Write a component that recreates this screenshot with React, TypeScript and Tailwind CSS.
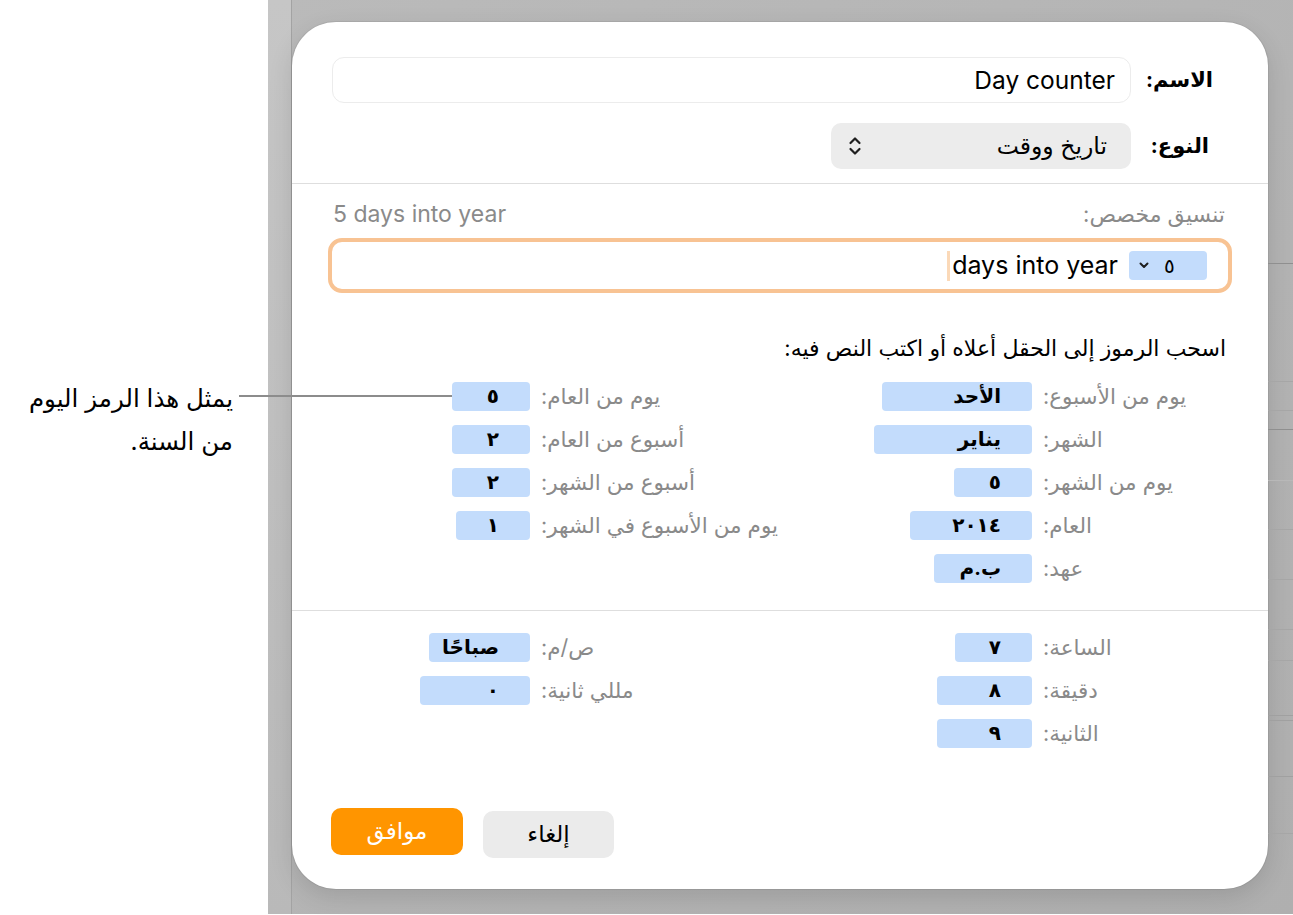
const rightRows = [
  { label: "يوم من الأسبوع:", value: "الأحد", w: "w-[150px]" },
  { label: "الشهر:", value: "يناير", w: "w-[158px]" },
  { label: "يوم من الشهر:", value: "٥", w: "w-[78px]" },
  { label: "العام:", value: "٢٠١٤", w: "w-[122px]" },
  { label: "عهد:", value: "ب.م", w: "w-[98px]" },
];

const leftRows = [
  { label: "يوم من العام:", value: "٥", w: "w-[78px]" },
  { label: "أسبوع من العام:", value: "٢", w: "w-[78px]" },
  { label: "أسبوع من الشهر:", value: "٢", w: "w-[78px]" },
  { label: "يوم من الأسبوع في الشهر:", value: "١", w: "w-[74px]" },
];

const timeRight = [
  { label: "الساعة:", value: "٧", w: "w-[77px]" },
  { label: "دقيقة:", value: "٨", w: "w-[95px]" },
  { label: "الثانية:", value: "٩", w: "w-[95px]" },
];

const timeLeft = [
  { label: "ص/م:", value: "صباحًا", w: "w-[101px]" },
  { label: "مللي ثانية:", value: "٠", w: "w-[110px]" },
];

type Row = { label: string; value: string; w: string };

function Token({ value, w }: { value: string; w: string }) {
  return (
    <div
      dir="rtl"
      className={`${w} h-[29px] rounded-[4px] bg-[#c3dcfc] pr-[31px] text-[20px] font-bold leading-[29px] text-black`}
    >
      {value}
    </div>
  );
}

function Column({ rows, boxW }: { rows: Row[]; boxW: string }) {
  return (
    <div className="flex flex-col gap-[14px]">
      {rows.map((r) => (
        <div key={r.label} className="flex h-[29px] items-center">
          <div className={`${boxW} flex shrink-0 justify-end`}>
            <Token value={r.value} w={r.w} />
          </div>
          <div dir="rtl" className="ml-[11px] whitespace-nowrap text-[21.5px] text-[#8a8a8a]">
            {r.label}
          </div>
        </div>
      ))}
    </div>
  );
}

function UpDown() {
  return (
    <svg width="14" height="22" viewBox="0 0 14 22" fill="none" stroke="#1f1f1f" strokeWidth="2.2" strokeLinecap="round" strokeLinejoin="round">
      <path d="M2.5 8 L7 3.5 L11.5 8" />
      <path d="M2.5 14 L7 18.5 L11.5 14" />
    </svg>
  );
}

function SmallChevron() {
  return (
    <svg width="10" height="7" viewBox="0 0 10 7" fill="none" stroke="#1f1f1f" strokeWidth="2" strokeLinecap="round" strokeLinejoin="round">
      <path d="M1.5 1.5 L5 5 L8.5 1.5" />
    </svg>
  );
}

function BackdropLines() {
  return (
    <div className="flex flex-col">
      <div className="h-[264px] border-b border-[#8f8f8f]" />
      <div className="h-[118px] border-b border-[#a6a6a6]" />
      <div className="h-[29px] border-b border-[#a6a6a6]" />
      <div className="h-[19px] border-b border-[#8f8f8f]" />
      <div className="h-[51px] border-b border-[#b8b8b8]" />
      <div className="h-[49px] border-b border-[#a6a6a6]" />
      <div className="h-[50px] border-b border-[#a6a6a6]" />
      <div className="h-[50px] border-b border-[#a6a6a6]" />
      <div className="h-[31px] border-b border-[#a6a6a6]" />
      <div className="h-[55px] border-b border-[#a0a0a0]" />
      <div className="h-[5px] border-b border-[#a0a0a0]" />
      <div className="h-[56px] border-b border-[#a0a0a0]" />
      <div className="h-[57px] border-b border-[#a6a6a6]" />
    </div>
  );
}

export default function App() {
  return (
    <div className="relative flex h-[915px] w-[1293px] overflow-hidden bg-white font-[Inter,'DejaVu_Sans',sans-serif] text-black">
      {/* annotation */}
      <div dir="rtl" className="w-[268px] shrink-0 whitespace-nowrap pr-[35px] pt-[377px] text-[24.5px] leading-[43px]">
        <div>يمثل هذا الرمز اليوم</div>
        <div>من السنة.</div>
      </div>

      <div className="flex h-[914px] flex-1 bg-gradient-to-br from-[#bababa] to-[#afafaf]">
        <div className="w-[24px] shrink-0 border-r border-[#a3a3a3] bg-gradient-to-b from-[#c6c6c6] to-[#b9b9b9]" />

        <div className="mt-[22px] flex h-[867px] w-[976px] shrink-0 flex-col rounded-[44px] bg-white shadow-[0_0_0_1px_rgba(0,0,0,0.06),0_8px_24px_rgba(0,0,0,0.12)]">
          {/* name / type */}
          <div className="flex items-center pl-[40px] pr-[55px] pt-[35px]">
            <div className="flex h-[46px] flex-1 items-center justify-end rounded-[12px] border border-[#ececec] pr-[15px] text-[24.5px]">
              Day counter
            </div>
            <div dir="rtl" className="w-[82px] text-[21px] font-bold">
              الاسم:
            </div>
          </div>
          <div className="mt-[20px] flex items-center justify-end pr-[55px]">
            <div className="flex h-[46px] w-[300px] items-center justify-between rounded-[10px] bg-[#ececec] pl-[17px] pr-[24px]">
              <UpDown />
              <span dir="rtl" className="text-[23.5px]">تاريخ ووقت</span>
            </div>
            <div dir="rtl" className="w-[82px] pr-[4px] text-[21px] font-bold">
              النوع:
            </div>
          </div>

          <div className="mt-[14px] h-px bg-[#dedede]" />

          {/* custom format */}
          <div className="mt-[16px] flex items-center justify-between pl-[41px] pr-[43px] leading-[28px] text-[#8a8a8a]">
            <span className="text-[23px]">5 days into year</span>
            <span dir="rtl" className="text-[22px]">تنسيق مخصص:</span>
          </div>
          <div className="mx-[36px] mt-[10px] flex h-[55px] items-center justify-end rounded-[14px] border-[4px] border-[#f8c393] pr-[21px]">
            <div className="mr-[2px] h-[30px] w-[3px] bg-[#fbd9b8]" />
            <span className="text-[25px]">days into year</span>
            <div className="ml-[11px] flex h-[29px] w-[78px] items-center rounded-[4px] bg-[#c3dcfc] pl-[10px]">
              <SmallChevron />
              <span className="ml-[15px] text-[20px]">٥</span>
            </div>
          </div>

          <div dir="rtl" className="mt-[41px] whitespace-nowrap pr-[42px] text-[22px] leading-[28px]">
            اسحب الرموز إلى الحقل أعلاه أو اكتب النص فيه:
          </div>

          {/* date tokens */}
          <div className="mt-[20px] flex pl-[108px]">
            <div className="w-[440px] shrink-0">
              <Column rows={leftRows} boxW="w-[130px]" />
            </div>
            <Column rows={rightRows} boxW="w-[192px]" />
          </div>

          <div className="mt-[27px] h-px bg-[#dedede]" />

          {/* time tokens */}
          <div className="mt-[22px] flex pl-[108px]">
            <div className="w-[440px] shrink-0">
              <Column rows={timeLeft} boxW="w-[130px]" />
            </div>
            <Column rows={timeRight} boxW="w-[192px]" />
          </div>

          {/* buttons */}
          <div className="mt-auto flex items-start gap-[20px] pb-[31px] pl-[39px]">
            <button className="h-[47px] w-[132px] rounded-[10px] bg-[#ff9500] text-[23px] text-white">
              موافق
            </button>
            <button className="mt-[3px] h-[47px] w-[131px] rounded-[10px] bg-[#ebebeb] text-[23px] text-black">
              إلغاء
            </button>
          </div>
        </div>

        <div className="flex-1">
          <BackdropLines />
        </div>
      </div>

      {/* callout leader line */}
      <div className="absolute left-[239px] top-[395px] h-[2px] w-[213px] bg-[#8c8c8c]" />
    </div>
  );
}
